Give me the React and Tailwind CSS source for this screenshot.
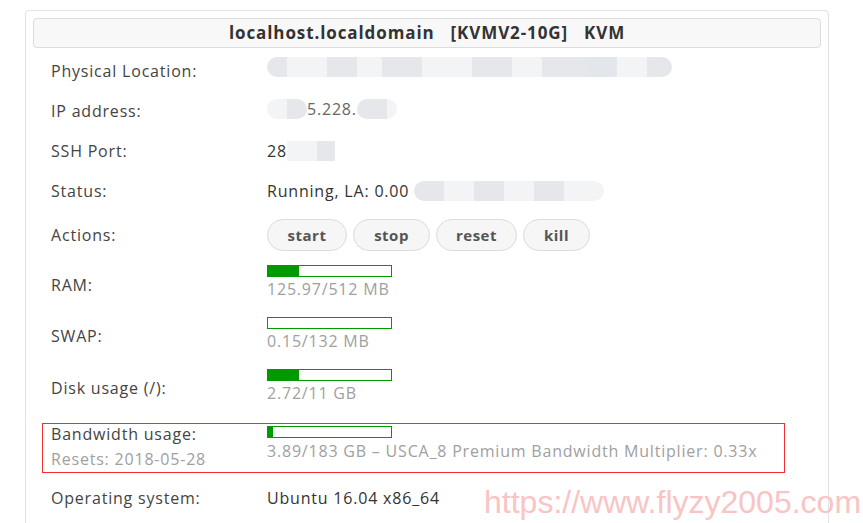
import React from 'react'

const font = { fontFamily: '"Open Sans", "Noto Sans", Arial, sans-serif' }

// pixelated redaction blobs: [width, shade]
const Blur = ({ cells, className = '' }) => (
  <span className={`inline-flex items-center h-[20px] rounded-full overflow-hidden blur-[0.6px] ${className}`}>
    {cells.map(([w, c], i) => (
      <span key={i} className={`h-full ${c}`} style={{ width: w }} />
    ))}
  </span>
)

const Bar = ({ pct }) => (
  <div className="w-[125px] h-[12px] border border-[#009900] bg-white">
    <div className="h-full bg-[#009900]" style={{ width: `${pct}%` }} />
  </div>
)

const Row = ({ label, h, children }) => (
  <div className="flex items-center pl-[25px]" style={{ height: h }}>
    <div className="w-[216px] text-[#444]">{label}</div>
    <div className="flex-1 text-[#333]">{children}</div>
  </div>
)

const Meter = ({ pct, text }) => (
  <div className="flex flex-col gap-[2px] mt-[-5px]">
    <Bar pct={pct} />
    <div className="text-[#a0a0a0] leading-[20px]">{text}</div>
  </div>
)

export default function App() {
  const buttons = [['start', 'w-[80px]'], ['stop', 'w-[77px]'], ['reset', 'w-[81px]'], ['kill', 'w-[67px]']]
  return (
    <div className="relative w-[863px] h-[523px] bg-white overflow-hidden text-[16px] tracking-[0.8px]" style={font}>
      <div className="ml-[25px] mt-[10px] w-[804px] h-[560px] border border-[#e2e2e2] rounded-[4px] pt-[7px]">
        {/* header */}
        <div className="mx-[7px] h-[30px] border border-[#dcdcdc] rounded-[4px] bg-[#f8f8f8] flex items-center justify-center font-bold text-[17px] tracking-[0.9px] text-[#333] whitespace-pre">
          localhost.localdomain   [KVMV2-10G]   KVM
        </div>

        <div className="pt-[3px]">
          <Row label="Physical Location:" h={40}>
            <Blur cells={[[20, 'bg-gray-200'], [40, 'bg-gray-100'], [30, 'bg-gray-200'], [25, 'bg-gray-100'], [40, 'bg-gray-200'], [50, 'bg-gray-100'], [40, 'bg-gray-200'], [30, 'bg-gray-100'], [45, 'bg-gray-200'], [30, 'bg-gray-300/60'], [30, 'bg-gray-100'], [25, 'bg-gray-200']]} className="mt-[-6px]" />
          </Row>
          <Row label="IP address:" h={40}>
            <span className="inline-flex items-center">
              <Blur cells={[[20, 'bg-gray-100'], [20, 'bg-gray-200']]} />
              <span className="text-[#666]">5.228.</span>
              <Blur cells={[[30, 'bg-gray-200'], [10, 'bg-gray-100']]} />
            </span>
          </Row>
          <Row label="SSH Port:" h={40}>
            <span className="inline-flex items-center">
              <span>28</span>
              <Blur cells={[[30, 'bg-gray-100'], [18, 'bg-gray-200']]} className="rounded-none" />
            </span>
          </Row>
          <Row label="Status:" h={40}>
            <span className="inline-flex items-center gap-[5px]">
              Running, LA: 0.00
              <Blur cells={[[30, 'bg-gray-200'], [30, 'bg-gray-100'], [30, 'bg-gray-200'], [30, 'bg-gray-100'], [30, 'bg-gray-200'], [40, 'bg-gray-100']]} />
            </span>
          </Row>
          <Row label="Actions:" h={48}>
            <div className="flex gap-[6px]">
              {buttons.map(([b, w]) => (
                <button key={b} className={`${w} h-[32px] rounded-full border border-[#dcdcdc] bg-[#f6f6f6] text-[#555] font-bold text-[15px] tracking-[0.5px]`}>
                  {b}
                </button>
              ))}
            </div>
          </Row>
          <Row label="RAM:" h={51}>
            <Meter pct={25} text="125.97/512 MB" />
          </Row>
          <Row label="SWAP:" h={52}>
            <Meter pct={0} text="0.15/132 MB" />
          </Row>
          <Row label="Disk usage (/):" h={52}>
            <Meter pct={25} text="2.72/11 GB" />
          </Row>

          <div className="h-[66px] pt-[9px]">
            <div className="ml-[16px] w-[743px] h-[50px] border border-[#f03030] flex pl-[8px]">
              <div className="w-[216px] leading-[25px] mt-[-2px]">
                <div className="text-[#444]">Bandwidth usage:</div>
                <div className="text-[#a0a0a0]">Resets: 2018-05-28</div>
              </div>
              <div className="flex flex-col gap-[3px] pt-[2px]">
                <Bar pct={4} />
                <div className="text-[#a0a0a0] leading-[20px]">3.89/183 GB – USCA_8 Premium Bandwidth Multiplier: 0.33x</div>
              </div>
            </div>
          </div>

          <Row label="Operating system:" h={36}>
            Ubuntu 16.04 x86_64
          </Row>
        </div>
      </div>

      {/* watermark */}
      <div className="absolute left-[484px] top-[483px] text-[32px] leading-[38px] tracking-normal text-[#f8c4c4]" style={{ fontFamily: '"Liberation Sans", Arial, sans-serif' }}>
        https://www.flyzy2005.com
      </div>
    </div>
  )
}
